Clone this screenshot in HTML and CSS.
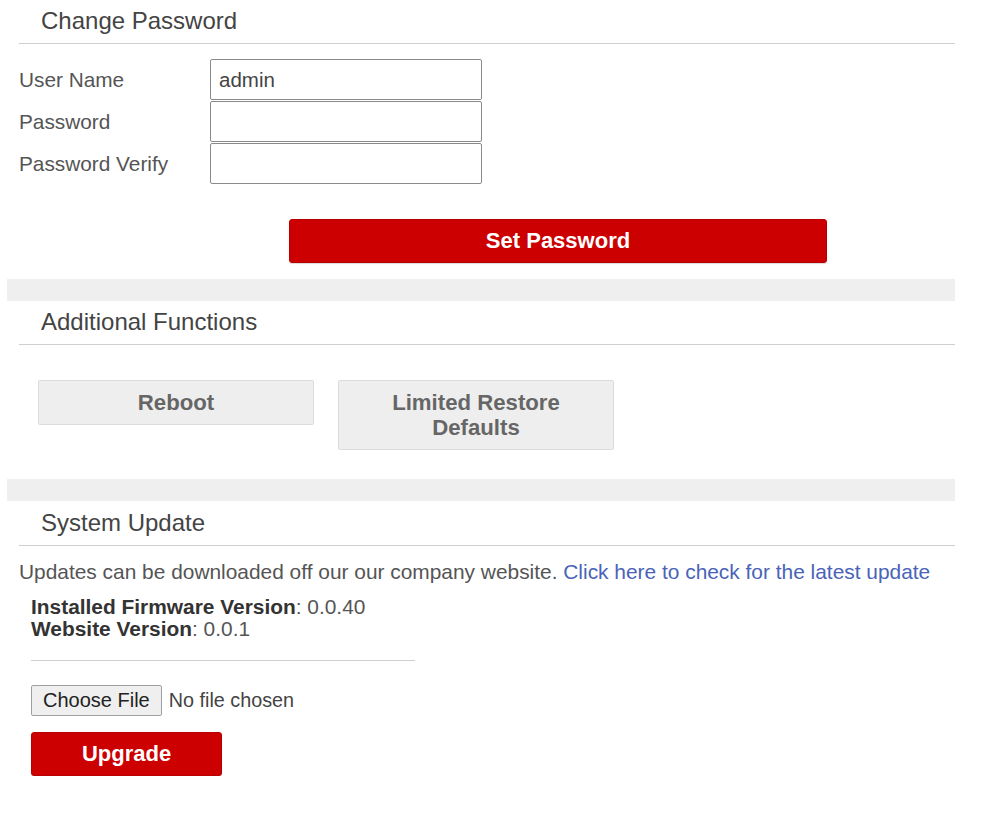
FILE: index.html
```html
<!DOCTYPE html>
<html>
<head>
<meta charset="utf-8">
<title>Settings</title>
<link rel="stylesheet" href="styles.css">
</head>
<body>
<div class="page">
  <section class="section">
    <h2 class="section-head">Change Password</h2>
    <form class="pw-form">
      <div class="form-row">
        <label class="form-label">User Name</label>
        <input class="text-input" type="text" value="admin">
      </div>
      <div class="form-row">
        <label class="form-label">Password</label>
        <input class="text-input" type="password">
      </div>
      <div class="form-row">
        <label class="form-label">Password Verify</label>
        <input class="text-input" type="password">
      </div>
      <button type="button" class="btn-red btn-set">Set Password</button>
    </form>
  </section>
  <div class="band"></div>
  <section class="section">
    <h2 class="section-head">Additional Functions</h2>
    <div class="func-row">
      <button type="button" class="btn-gray">Reboot</button>
      <button type="button" class="btn-gray">Limited Restore<br>Defaults</button>
    </div>
  </section>
  <div class="band"></div>
  <section class="section">
    <h2 class="section-head head-last">System Update</h2>
    <p class="update-note">Updates can be downloaded off our our company website. <a class="update-link" href="#">Click here to check for the latest update</a></p>
    <div class="versions">
      <div><b>Installed Firmware Version</b>: 0.0.40</div>
      <div><b>Website Version</b>: 0.0.1</div>
    </div>
    <div class="divider"></div>
    <div class="file-row">
      <span class="file-btn">Choose File</span>
      <span class="file-name">No file chosen</span>
    </div>
    <button type="button" class="btn-red btn-upgrade">Upgrade</button>
  </section>
</div>
</body>
</html>
```
FILE: styles.css
```css
html, body {
  margin: 0;
  padding: 0;
  background: #fff;
}
body {
  font-family: "Liberation Sans", Arial, sans-serif;
  color: #555;
}
.page {
  width: 948px;
  margin-left: 7px;
}
.section-head {
  margin: 0 0 0 12px;
  padding-left: 22px;
  height: 43px;
  line-height: 41px;
  font-size: 24px;
  font-weight: normal;
  color: #444;
  border-bottom: 1px solid #cfcfcf;
}
.head-last {
  height: 44px;
  line-height: 43px;
}
.band {
  height: 22px;
  background: #efefef;
}
.pw-form {
  margin: 0;
  padding-top: 15px;
  padding-bottom: 16px;
  display: flex;
  flex-direction: column;
}
.form-row {
  display: flex;
  align-items: center;
  height: 41px;
  margin-bottom: 1px;
}
.form-label {
  width: 191px;
  margin-left: 12px;
  font-size: 20.8px;
  color: #555;
}
.text-input {
  box-sizing: border-box;
  width: 272px;
  height: 41px;
  border: 1.5px solid #8a8a8a;
  border-radius: 2px;
  padding: 0 8px;
  font-family: "Liberation Sans", Arial, sans-serif;
  font-size: 20.5px;
  color: #444;
  outline: none;
}
.btn-red {
  background: #cc0000;
  color: #fff;
  border: 1px solid #b80000;
  border-radius: 3px;
  font-family: "Liberation Sans", Arial, sans-serif;
  font-weight: bold;
  font-size: 22px;
  box-shadow: 0 1px 1px rgba(0,0,0,0.15);
  cursor: pointer;
}
.btn-set {
  align-self: flex-start;
  margin-top: 34px;
  margin-left: 282px;
  width: 538px;
  height: 44px;
}
.func-row {
  display: flex;
  align-items: flex-start;
  gap: 24px;
  padding: 35px 0 29px 31px;
}
.btn-gray {
  width: 276px;
  padding: 9px 0;
  background: #eeeeee;
  border: 1px solid #dcdcdc;
  border-radius: 2px;
  color: #666;
  font-family: "Liberation Sans", Arial, sans-serif;
  font-weight: bold;
  font-size: 22.2px;
  line-height: 25px;
  cursor: pointer;
}
.update-note {
  margin: 14px 0 0 12px;
  font-size: 20.9px;
  line-height: 24px;
  color: #555;
  white-space: nowrap;
}
.update-link {
  color: #4a63b8;
  text-decoration: none;
}
.versions {
  margin: 12px 0 0 24px;
  font-size: 20.9px;
  line-height: 22px;
  color: #555;
}
.versions b {
  color: #333;
}
.divider {
  margin: 20px 0 0 24px;
  width: 384px;
  height: 1px;
  background: #cfcfcf;
}
.file-row {
  display: flex;
  align-items: center;
  margin: 24px 0 0 24px;
}
.file-btn {
  box-sizing: border-box;
  height: 31px;
  line-height: 29px;
  padding: 0 11px;
  background: #efefef;
  border: 1px solid #a0a0a0;
  border-radius: 2px;
  font-size: 20px;
  color: #222;
}
.file-name {
  margin-left: 7px;
  font-size: 19.8px;
  color: #444;
}
.btn-upgrade {
  display: block;
  margin: 16px 0 0 24px;
  width: 191px;
  height: 44px;
}
```
